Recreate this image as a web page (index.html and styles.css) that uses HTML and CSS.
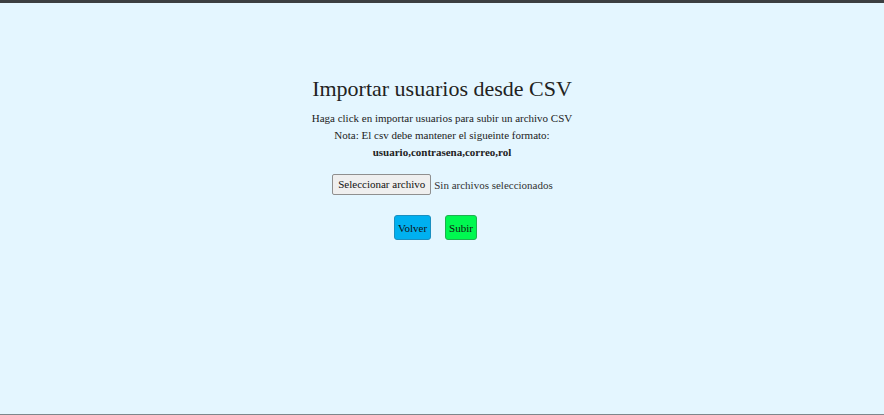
FILE: index.html
```html
<!DOCTYPE html>
<html lang="es">
<head>
<meta charset="utf-8">
<title>Importar usuarios</title>
<link rel="stylesheet" href="styles.css">
</head>
<body>
<div class="frame">
  <main class="content">
    <h1 class="title">Importar usuarios desde CSV</h1>
    <p class="line">Haga click en importar usuarios para subir un archivo CSV</p>
    <p class="line">Nota: El csv debe mantener el sigueinte formato:</p>
    <p class="line bold">usuario,contrasena,correo,rol</p>
    <div class="file-row">
      <span class="file-btn">Seleccionar archivo</span>
      <span class="file-text">Sin archivos seleccionados</span>
    </div>
    <div class="actions">
      <button class="btn btn-back">Volver</button>
      <button class="btn btn-upload">Subir</button>
    </div>
  </main>
</div>
</body>
</html>
```
FILE: styles.css
```css
html, body {
  margin: 0;
  padding: 0;
  height: 100%;
}
body {
  font-family: "Liberation Serif", "Times New Roman", serif;
  color: #222;
  background: #e4f6ff;
}
.frame {
  box-sizing: border-box;
  height: 415px;
  border-top: 3px solid #3c3f41;
  border-bottom: 1px solid #7d878c;
  background: #e4f6ff;
}
.content {
  display: flex;
  flex-direction: column;
  align-items: center;
  padding-top: 73px;
}
.title {
  margin: 0 0 8px;
  font-size: 22px;
  font-weight: normal;
  line-height: 26px;
  color: #222;
}
.line {
  margin: 0;
  font-size: 11px;
  line-height: 17px;
  color: #222;
}
.bold {
  font-weight: bold;
}
.file-row {
  display: flex;
  align-items: center;
  gap: 3px;
  margin-top: 13px;
  margin-left: 1px;
}
.file-btn {
  box-sizing: border-box;
  width: 99px;
  height: 21px;
  text-align: center;
  font-size: 11px;
  line-height: 19px;
  background: #efefef;
  border: 1px solid #8f8f8f;
  border-radius: 2px;
  color: #111;
}
.file-text {
  font-size: 11px;
  color: #333;
}
.actions {
  display: flex;
  gap: 14px;
  margin-top: 20px;
  margin-left: -13px;
}
.btn {
  box-sizing: border-box;
  height: 25px;
  padding: 0;
  font-family: "Liberation Serif", "Times New Roman", serif;
  font-size: 11px;
  color: #111;
  border-radius: 3px;
  cursor: pointer;
}
.btn-back {
  width: 37px;
  background: #00b0f0;
  border: 1px solid #1a8fc0;
}
.btn-upload {
  width: 32px;
  background: #00f850;
  border: 1px solid #1fb050;
}
```
